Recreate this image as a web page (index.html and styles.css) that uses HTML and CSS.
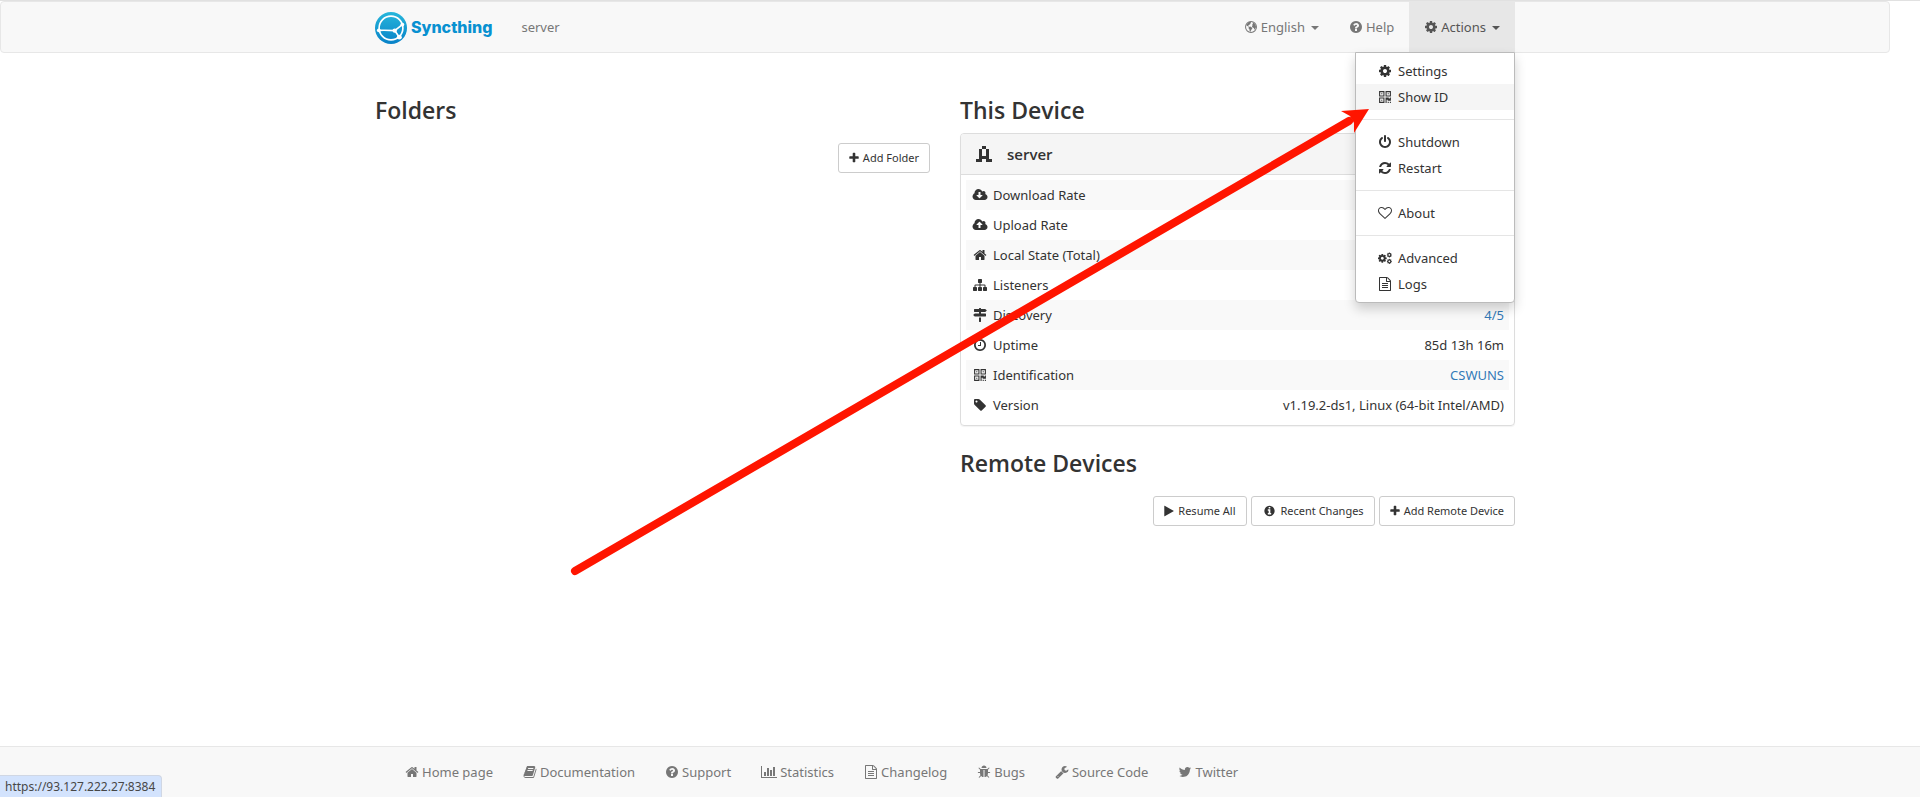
FILE: index.html
```html
<!DOCTYPE html>
<html lang="en">
<head>
<meta charset="utf-8">
<title>server | Syncthing</title>
<link rel="stylesheet" href="styles.css">
</head>
<body>
<svg class="sprite" aria-hidden="true">
  <symbol id="cog" viewBox="0 0 1792 1792"><path d="M1152 896q0-106-75-181t-181-75-181 75-75 181 75 181 181 75 181-75 75-181zm512-109v222q0 12-8 23t-20 13l-185 28q-19 54-39 91 35 50 107 138 10 12 10 25t-9 23q-27 37-99 108t-94 71q-12 0-26-9l-138-108q-44 23-91 38-16 136-29 186-7 28-36 28h-222q-14 0-24.500-8.500t-11.500-21.500l-28-184q-49-16-90-37l-141 107q-10 9-25 9-14 0-25-11-126-114-165-168-7-10-7-23 0-12 8-23 15-21 51-66.500t54-70.500q-27-50-41-99l-183-27q-13-2-21-12.500t-8-23.500v-222q0-12 8-23t19-13l186-28q14-46 39-92-40-57-107-138-10-12-10-24 0-10 9-23 26-36 98.500-107.500t94.500-71.500q13 0 26 10l138 107q44-23 91-38 16-136 29-186 7-28 36-28h222q14 0 24.500 8.500t11.500 21.500l28 184q49 16 90 37l142-107q9-9 24-9 13 0 25 10 129 119 165 170 7 8 7 22 0 12-8 23-15 21-51 66.500t-54 70.500q26 50 41 98l183 28q13 2 21 12.500t8 23.500z"/></symbol>
  <symbol id="cogs" viewBox="0 0 2048 1792"><use href="#cog" x="-120" y="190" width="1500" height="1500"/><use href="#cog" x="1230" y="20" width="860" height="860"/><use href="#cog" x="1230" y="960" width="860" height="860"/></symbol>
  <symbol id="home" viewBox="0 0 1792 1792"><path d="M1472 992v480q0 26-19 45t-45 19h-384v-384h-256v384h-384q-26 0-45-19t-19-45v-480q0-1 .5-3t.5-3l575-474 575 474q1 2 1 6zm223-69l-62 74q-8 9-21 11h-3q-13 0-21-7l-692-577-692 577q-12 8-24 7-13-2-21-11l-62-74q-8-10-7-23.500t11-21.500l719-599q32-26 76-26t76 26l244 204v-195q0-14 9-23t23-9h192q14 0 23 9t9 23v408l219 182q10 8 11 21.500t-7 23.500z"/></symbol>
  <symbol id="plus" viewBox="192 0 1408 1792"><path d="M1600 736v192q0 40-28 68t-68 28h-416v416q0 40-28 68t-68 28h-192q-40 0-68-28t-28-68v-416h-416q-40 0-68-28t-28-68v-192q0-40 28-68t68-28h416v-416q0-40 28-68t68-28h192q40 0 68 28t28 68v416h416q40 0 68 28t28 68z"/></symbol>
  <symbol id="play" viewBox="192 0 1408 1792"><path d="M1576 927l-1328 738q-23 13-39.500 3t-16.500-36v-1472q0-26 16.500-36t39.500 3l1328 738q23 13 23 31t-23 31z"/></symbol>
  <symbol id="question" viewBox="0 0 1792 1792"><path d="M1024 1376v-192q0-14-9-23t-23-9h-192q-14 0-23 9t-9 23v192q0 14 9 23t23 9h192q14 0 23-9t9-23zm256-672q0-88-55.500-163t-138.500-116-170-41q-243 0-371 213-15 24 8 42l132 100q7 6 19 6 16 0 25-12 53-68 86-92 34-24 86-24 48 0 85.500 26t37.500 59q0 38-20 61t-68 45q-63 28-115.500 86.500t-52.500 125.500v36q0 14 9 23t23 9h192q14 0 23-9t9-23q0-19 21.500-49.500t54.500-49.500q32-18 49-28.500t46-35 44.500-48 28-60.500 12.500-81zm384 192q0 209-103 385.500t-279.500 279.500-385.500 103-385.500-103-279.500-279.500-103-385.500 103-385.500 279.500-279.500 385.500-103 385.500 103 279.500 279.500 103 385.500z"/></symbol>
  <symbol id="info" viewBox="0 0 1792 1792"><path d="M1152 1376v-160q0-14-9-23t-23-9h-96v-512q0-14-9-23t-23-9h-320q-14 0-23 9t-9 23v160q0 14 9 23t23 9h96v320h-96q-14 0-23 9t-9 23v160q0 14 9 23t23 9h448q14 0 23-9t9-23zm-128-896v-160q0-14-9-23t-23-9h-192q-14 0-23 9t-9 23v160q0 14 9 23t23 9h192q14 0 23-9t9-23zm640 416q0 209-103 385.500t-279.500 279.500-385.500 103-385.500-103-279.500-279.500-103-385.500 103-385.500 279.500-279.500 385.500-103 385.500 103 279.500 279.500 103 385.500z"/></symbol>
  <symbol id="power" viewBox="0 0 1792 1792"><path d="M1664 896q0 156-61 298t-164 245-245 164-298 61-298-61-245-164-164-245-61-298q0-182 80.500-343t226.500-270q43-32 95.500-25t83.500 50q32 42 24.500 94.500t-49.500 84.500q-98 74-151.500 181t-53.500 228q0 104 40.500 198.500t109.500 163.500 163.500 109.500 198.500 40.500 198.500-40.500 163.500-109.500 109.500-163.500 40.500-198.500q0-121-53.500-228t-151.500-181q-42-32-49.500-84.500t24.500-94.500q31-43 84-50t95 25q146 109 226.500 270t80.500 343zm-640-768v640q0 52-38 90t-90 38-90-38-38-90v-640q0-52 38-90t90-38 90 38 38 90z"/></symbol>
  <symbol id="refresh" viewBox="0 0 1792 1792"><path d="M1639 1056q0 5-1 7-64 268-268 434.500t-478 166.500q-146 0-282.500-55t-243.500-157l-129 129q-19 19-45 19t-45-19-19-45v-448q0-26 19-45t45-19h448q26 0 45 19t19 45-19 45l-137 137q71 66 161 102t187 36q134 0 250-65t186-179q11-17 53-117 8-23 30-23h192q13 0 22.500 9.500t9.500 22.500zm25-800v448q0 26-19 45t-45 19h-448q-26 0-45-19t-19-45 19-45l138-138q-148-137-349-137-134 0-250 65t-186 179q-11 17-53 117-8 23-30 23h-199q-13 0-22.500-9.500t-9.500-22.500v-7q65-268 270-434.500t480-166.500q146 0 284 55.500t245 156.500l130-129q19-19 45-19t45 19 19 45z"/></symbol>
  <symbol id="heart" viewBox="0 0 1792 1792"><path d="M1664 596q0-81-21.500-143t-55-98.500-81.500-59.500-94-31-98-8-112 25.500-110.500 64-86.500 72-60 61.500q-18 22-49 22t-49-22q-24-28-60-61.500t-86.500-72-110.500-64-112-25.500-98 8-94 31-81.500 59.500-55 98.500-21.500 143q0 168 187 355l581 560 580-559q188-188 188-356zm128 0q0 221-229 450l-623 600q-18 18-44 18t-44-18l-624-602q-10-8-27.500-26t-55.500-65.500-68-97.500-53.500-121-23.500-138q0-220 127-344t351-124q62 0 126.500 21.500t120 58 95.500 68.500 76 68q36-36 76-68t95.500-68.500 120-58 126.500-21.500q224 0 351 124t127 344z"/></symbol>
  <symbol id="file" viewBox="0 0 1792 1792"><path d="M1596 380q28 28 48 76t20 88v1152q0 40-28 68t-68 28h-1344q-40 0-68-28t-28-68v-1600q0-40 28-68t68-28h896q40 0 88 20t76 48zm-444-244v376h376q-10-29-22-41l-313-313q-12-12-41-22zm384 1528v-1024h-416q-40 0-68-28t-28-68v-416h-768v1536h1280zm-1024-864q0-14 9-23t23-9h704q14 0 23 9t9 23v64q0 14-9 23t-23 9h-704q-14 0-23-9t-9-23v-64zm736 224q14 0 23 9t9 23v64q0 14-9 23t-23 9h-704q-14 0-23-9t-9-23v-64q0-14 9-23t23-9h704zm0 256q14 0 23 9t9 23v64q0 14-9 23t-23 9h-704q-14 0-23-9t-9-23v-64q0-14 9-23t23-9h704z"/></symbol>
  <symbol id="clock" viewBox="0 0 1792 1792"><path d="M1024 544v448q0 14-9 23t-23 9h-320q-14 0-23-9t-9-23v-64q0-14 9-23t23-9h224v-352q0-14 9-23t23-9h64q14 0 23 9t9 23zm416 352q0-148-73-273t-198-198-273-73-273 73-198 198-73 273 73 273 198 198 273 73 273-73 198-198 73-273zm224 0q0 209-103 385.500t-279.500 279.500-385.500 103-385.500-103-279.500-279.500-103-385.500 103-385.500 279.500-279.500 385.500-103 385.500 103 279.500 279.500 103 385.500z"/></symbol>
  <symbol id="tag" viewBox="0 0 1792 1792"><path d="M576 448q0-53-37.500-90.500t-90.500-37.500-90.500 37.500-37.500 90.500 37.500 90.500 90.500 37.500 90.500-37.500 37.500-90.500zm1067 576q0 53-37 90l-491 492q-39 37-91 37-53 0-90-37l-715-716q-38-37-64.500-101t-26.500-117v-416q0-52 38-90t90-38h416q53 0 117 26.500t102 64.500l715 714q37 39 37 91z"/></symbol>
  <symbol id="twitter" viewBox="0 0 1792 1792"><path d="M1684 408q-67 98-162 167 1 14 1 42 0 130-38 259.500t-115.500 248.500-184.500 210.500-258 146-323 54.500q-271 0-496-145 35 4 78 4 225 0 401-138-105-2-188-64.500t-114-159.500q33 5 61 5 43 0 85-11-112-23-185.500-111.500t-73.500-205.500v-4q68 38 146 41-66-44-105-115t-39-154q0-88 44-163 121 149 294.500 238.500t371.500 99.500q-8-38-8-74 0-134 94.500-228.500t228.500-94.500q140 0 236 102 109-21 205-78-37 115-142 178 93-10 186-50z"/></symbol>
  <symbol id="wrench" viewBox="0 0 1792 1792"><path d="M448 1472q0-26-19-45t-45-19-45 19-19 45 19 45 45 19 45-19 19-45zm644-420l-682 682q-37 37-90 37-52 0-91-37l-106-108q-38-36-38-90 0-53 38-91l681-681q39 98 114.500 173.500t173.500 114.500zm634-435q0 39-23 106-47 134-164.500 217.500t-258.500 83.500q-185 0-316.500-131.500t-131.500-316.500 131.500-316.500 316.500-131.500q58 0 121.500 16.500t107.500 46.500q16 11 16 28t-16 28l-293 169v224l193 107q5-3 79-48.500t135.500-81 70.500-35.500q15 0 23.500 10t8.500 25z"/></symbol>
  <symbol id="sitemap" viewBox="0 0 1792 1792"><path d="M1792 1248v320q0 40-28 68t-68 28h-320q-40 0-68-28t-28-68v-320q0-40 28-68t68-28h96v-192h-512v192h96q40 0 68 28t28 68v320q0 40-28 68t-68 28h-320q-40 0-68-28t-28-68v-320q0-40 28-68t68-28h96v-192h-512v192h96q40 0 68 28t28 68v320q0 40-28 68t-68 28h-320q-40 0-68-28t-28-68v-320q0-40 28-68t68-28h96v-192q0-52 38-90t90-38h512v-192h-96q-40 0-68-28t-28-68v-320q0-40 28-68t68-28h320q40 0 68 28t28 68v320q0 40-28 68t-68 28h-96v192h512q52 0 90 38t38 90v192h96q40 0 68 28t28 68z"/></symbol>
  <symbol id="signs" viewBox="0 0 1792 1792"><path d="M1745 297q10 10 10 23t-10 23l-141 141q-28 28-68 28h-1344q-26 0-45-19t-19-45v-256q0-26 19-45t45-19h576v-64q0-26 19-45t45-19h128q26 0 45 19t19 45v64h512q40 0 68 28zm-977 919h256v512q0 26-19 45t-45 19h-128q-26 0-45-19t-19-45v-512zm832-512q26 0 45 19t19 45v256q0 26-19 45t-45 19h-1344q-40 0-68-28l-141-141q-10-10-10-23t10-23l141-141q28-28 68-28h512v-192h256v192h576z"/></symbol>
  <symbol id="qrcode" viewBox="64 0 1664 1664"><path d="M576 1152v128h-128v-128h128zm0-768v128h-128v-128h128zm768 0v128h-128v-128h128zm-1024 1023h384v-383h-384v383zm0-767h384v-384h-384v384zm768 0h384v-384h-384v384zm-256 256v640h-640v-640h640zm512 512v128h-128v-128h128zm256 0v128h-128v-128h128zm0-512v384h-384v-128h-128v384h-128v-640h384v128h128v-128h128zm-768-768v640h-640v-640h640zm768 0v640h-640v-640h640z"/></symbol>
  <symbol id="download" viewBox="-64 0 1920 1792"><path d="M1216 928q0-14-9-23t-23-9h-224v-352q0-13-9.500-22.500t-22.500-9.500h-192q-13 0-22.500 9.500t-9.500 22.500v352h-224q-13 0-22.500 9.500t-9.500 22.500q0 14 9 23l352 352q9 9 23 9t23-9l351-351q10-12 10-24zm640 224q0 159-112.500 271.500t-271.500 112.500h-1088q-185 0-316.500-131.500t-131.500-316.500q0-130 70-240t188-165q-2-30-2-43 0-212 150-362t362-150q156 0 285.500 87t188.500 231q71-62 166-62 106 0 181 75t75 181q0 76-41 138 130 31 213.500 135.500t83.500 238.500z"/></symbol>
  <symbol id="upload" viewBox="-64 0 1920 1792"><path d="M1216 864q0-14-9-23l-352-352q-9-9-23-9t-23 9l-351 351q-10 12-10 24 0 14 9 23t23 9h224v352q0 13 9.500 22.500t22.500 9.500h192q13 0 22.500-9.500t9.500-22.500v-352h224q13 0 22.500-9.500t9.500-22.500zm640 288q0 159-112.500 271.500t-271.500 112.500h-1088q-185 0-316.500-131.500t-131.500-316.500q0-130 70-240t188-165q-2-30-2-43 0-212 150-362t362-150q156 0 285.500 87t188.500 231q71-62 166-62 106 0 181 75t75 181q0 76-41 138 130 31 213.500 135.500t83.500 238.500z"/></symbol>
  <symbol id="chart" viewBox="0 0 2048 1792"><path d="M640 896v512h-256v-512h256zm384-512v1024h-256v-1024h256zm1024 1152v128h-2048v-1536h128v1408h1920zm-640-896v768h-256v-768h256zm384-384v1152h-256v-1152h256z"/></symbol>
  <symbol id="book" viewBox="0 0 1792 1792"><path d="M1703 478q40 57 18 129l-275 906q-19 64-76.500 107.500t-122.500 43.500h-923q-77 0-148.500-53.500t-99.500-131.500q-24-67-2-127 0-4 3-27t4-37q1-8-3-21.500t-3-19.500q2-11 8-21t16.500-23.500 16.500-23.500q23-38 45-91.500t30-91.500q3-10 .5-30t-.5-28q3-11 17-28t17-23q21-36 42-92t25-90q1-9-2.500-32t.5-28q4-13 22-30.500t22-22.500q19-26 42.500-84.500t27.500-96.500q1-8-3-25.500t-2-26.500q2-8 9-18t18-23 17-21q8-12 16.500-30.500t15-35 16-36 19.500-32 26.500-23.500 36-11.500 47.500 5.500l-1 3q38-9 51-9h761q74 0 114 56t18 130l-274 906q-36 119-71.500 153.500t-128.500 34.500h-869q-27 0-38 15-11 16-1 43 24 70 144 70h923q29 0 56-15.500t35-41.500l300-987q7-22 5-57 38 15 59 43zm-1064 2q-4 13 2 22.500t20 9.500h608q13 0 25.500-9.500t16.500-22.500l21-64q4-13-2-22.500t-20-9.500h-608q-13 0-25.500 9.500t-16.500 22.500zm-83 256q-4 13 2 22.500t20 9.500h608q13 0 25.500-9.500t16.500-22.500l21-64q4-13-2-22.500t-20-9.500h-608q-13 0-25.500 9.500t-16.500 22.500z"/></symbol>
  <symbol id="bug" viewBox="0 0 1792 1792"><path d="M1696 960q0 26-19 45t-45 19h-224q0 171-67 290l208 209q19 19 19 45t-19 45q-18 19-45 19t-45-19l-198-197q-5 5-15 13t-42 28.500-65 36.500-82 29-97 13v-896h-128v896q-51 0-101.500-13.500t-87-33-66-39-43.500-32.500l-15-14-183 207q-20 21-48 21-24 0-43-16-19-18-20.500-44.500t15.500-46.500l202-227q-58-114-58-274h-224q-26 0-45-19t-19-45 19-45 45-19h224v-294l-173-173q-19-19-19-45t19-45 45-19 45 19l173 173h844l173-173q19-19 45-19t45 19 19 45-19 45l-173 173v294h224q26 0 45 19t19 45zm-480-576h-640q0-133 93.500-226.500t226.500-93.500 226.500 93.500 93.500 226.500z"/></symbol>
  <symbol id="globe" viewBox="0 0 1792 1792"><circle cx="896" cy="896" r="700" fill="none" stroke="currentColor" stroke-width="130"/><path d="M330 560L620 270 850 250 930 330 800 400 860 480 740 560 620 640 540 720 620 800 560 860 450 760 350 760zM600 880L800 840 1000 960 1080 1060 960 1200 860 1400 800 1520 720 1400 700 1200 580 1060zM1020 300L1300 380 1500 700 1540 900 1460 1100 1340 1240 1260 1020 1060 920 1020 760 1120 640 1040 560 1160 460z"/></symbol>
</svg>

<header class="navbar">
  <div class="container nav-row">
    <a class="brand" href="#">
      <svg class="logo" viewBox="0 0 117 117" aria-hidden="true">
        <defs><linearGradient id="blue" x1="0" y1="0" x2="0" y2="1"><stop offset="0" stop-color="#26b6db"/><stop offset="1" stop-color="#0882c8"/></linearGradient></defs>
        <circle cx="58.500" cy="58.500" r="58.500" fill="url(#blue)"/>
        <g fill="none" stroke="#fff" stroke-width="6"><circle cx="58.500" cy="58.500" r="43.500"/><path d="M72 68L100 46M72 68L89 92M72 68Q42 66 14 67"/></g>
        <g fill="#fff"><circle cx="72" cy="68" r="8"/><circle cx="100" cy="46" r="7"/><circle cx="89" cy="92" r="9"/><circle cx="14" cy="67" r="7"/></g>
      </svg>
      <span>Syncthing</span>
    </a>
    <p class="nav-name">server</p>
    <nav class="nav-menu">
      <button class="nav-item" type="button"><svg class="icon"><use href="#globe"/></svg>English<span class="caret"></span></button>
      <a class="nav-item" href="#"><svg class="icon"><use href="#question"/></svg>Help</a>
      <div class="dropdown">
        <button class="nav-item open" type="button" aria-expanded="true"><svg class="icon"><use href="#cog"/></svg>Actions<span class="caret"></span></button>
        <ul class="menu">
          <li><a href="#"><svg class="icon"><use href="#cog"/></svg>Settings</a></li>
          <li><a class="hover" href="#"><svg class="icon"><use href="#qrcode"/></svg>Show ID</a></li>
          <li class="divider"></li>
          <li><a href="#"><svg class="icon"><use href="#power"/></svg>Shutdown</a></li>
          <li><a href="#"><svg class="icon"><use href="#refresh"/></svg>Restart</a></li>
          <li class="divider"></li>
          <li><a href="#"><svg class="icon"><use href="#heart"/></svg>About</a></li>
          <li class="divider"></li>
          <li><a href="#"><svg class="icon"><use href="#cogs"/></svg>Advanced</a></li>
          <li><a href="#"><svg class="icon"><use href="#file"/></svg>Logs</a></li>
        </ul>
      </div>
    </nav>
  </div>
</header>

<main class="container columns">
  <section>
    <h3>Folders</h3>
    <div class="buttons"><button class="btn" type="button"><svg class="icon"><use href="#plus"/></svg>Add Folder</button></div>
  </section>
  <section>
    <h3>This Device</h3>
    <div class="panel">
      <button class="panel-heading" type="button">
        <svg class="identicon" viewBox="0 0 5 5" shape-rendering="crispEdges" aria-hidden="true"><path d="M2 0h1v1h-1zM1 1h1v3h-1zM3 1h1v3h-1zM2 3h1v1h-1zM0 4h2v1h-2zM3 4h2v1h-2z"/></svg>
        server
      </button>
      <div class="panel-body">
        <table>
          <tbody>
            <tr><th scope="row"><svg class="icon"><use href="#download"/></svg>Download Rate</th><td></td></tr>
            <tr><th scope="row"><svg class="icon"><use href="#upload"/></svg>Upload Rate</th><td></td></tr>
            <tr><th scope="row"><svg class="icon"><use href="#home"/></svg>Local State (Total)</th><td></td></tr>
            <tr><th scope="row"><svg class="icon"><use href="#sitemap"/></svg>Listeners</th><td></td></tr>
            <tr><th scope="row"><svg class="icon"><use href="#signs"/></svg>Discovery</th><td><a href="#">4/5</a></td></tr>
            <tr><th scope="row"><svg class="icon"><use href="#clock"/></svg>Uptime</th><td>85d 13h 16m</td></tr>
            <tr><th scope="row"><svg class="icon"><use href="#qrcode"/></svg>Identification</th><td><a href="#">CSWUNS</a></td></tr>
            <tr><th scope="row"><svg class="icon"><use href="#tag"/></svg>Version</th><td>v1.19.2-ds1, Linux (64-bit Intel/AMD)</td></tr>
          </tbody>
        </table>
      </div>
    </div>
    <h3>Remote Devices</h3>
    <div class="buttons">
      <button class="btn" type="button"><svg class="icon"><use href="#play"/></svg>Resume All</button>
      <button class="btn" type="button"><svg class="icon wide"><use href="#info"/></svg>Recent Changes</button>
      <button class="btn" type="button"><svg class="icon"><use href="#plus"/></svg>Add Remote Device</button>
    </div>
  </section>
</main>

<footer class="footer">
  <nav class="container footer-row">
    <a href="#"><svg class="icon"><use href="#home"/></svg>Home page</a>
    <a href="#"><svg class="icon"><use href="#book"/></svg>Documentation</a>
    <a href="#"><svg class="icon"><use href="#question"/></svg>Support</a>
    <a href="#"><svg class="icon chart"><use href="#chart"/></svg>Statistics</a>
    <a href="#"><svg class="icon"><use href="#file"/></svg>Changelog</a>
    <a href="#"><svg class="icon"><use href="#bug"/></svg>Bugs</a>
    <a href="#"><svg class="icon"><use href="#wrench"/></svg>Source Code</a>
    <a href="#"><svg class="icon"><use href="#twitter"/></svg>Twitter</a>
  </nav>
</footer>

<div class="status">https://93.127.222.27:8384</div>

<svg class="arrow" viewBox="0 0 802 474" aria-hidden="true">
  <path class="shaft" d="M8 466L782 16"/>
  <path d="M802 4L774 6L783 11L787 18L787 28Z"/>
</svg>
</body>
</html>
```

FILE: styles.css
```css
* { box-sizing: border-box; }

body {
  margin: 0;
  padding-right: 30px;
  min-height: 100vh;
  border-top: 1px solid #e1e1e1;
  background: #fff;
  color: #333;
  font-family: "Noto Sans", "Open Sans", sans-serif;
  font-size: 13px;
  line-height: 20px;
}

a { color: #337ab7; text-decoration: none; }
button { font: inherit; color: inherit; cursor: pointer; }
.sprite { position: absolute; width: 0; height: 0; }
.icon { flex: none; width: 14px; height: 14px; fill: currentColor; }

.container { max-width: 1170px; margin: 0 auto; padding: 0 15px; }

/* Top bar */
.navbar {
  margin-bottom: 44px;
  border: 1px solid #e7e7e7;
  border-radius: 4px;
  background: #f8f8f8;
}
.nav-row { display: flex; height: 50px; }
.brand { display: flex; align-items: center; gap: 4px; color: #0891d1; font: 800 16px/20px Inter, sans-serif; }
.logo { width: 32px; height: 32px; margin-top: 2px; }
.nav-name { margin: 15px 0 0 29px; color: #777; }
.nav-menu { display: flex; margin-left: auto; }
.nav-item {
  display: flex;
  align-items: center;
  gap: 3px;
  height: 50px;
  padding: 0 15px;
  border: 0;
  background: none;
  color: #777;
}
.nav-item.open { background: #e7e7e7; color: #555; }
.caret {
  margin: 2px 0 0 3px;
  border: 4px solid transparent;
  border-top-color: currentColor;
  border-bottom: 0;
}

/* Actions menu */
.dropdown { position: relative; }
.menu {
  position: absolute;
  top: 100%;
  right: 0;
  z-index: 2;
  width: 160px;
  margin: 0;
  padding: 5px 0;
  border: 1px solid #bbb;
  border-radius: 0 0 4px 4px;
  background: #fff;
  box-shadow: 0 6px 12px rgba(0, 0, 0, .18);
  list-style: none;
}
.menu a { display: flex; align-items: center; gap: 6px; padding: 3px 20px 3px 22px; color: #333; }
.menu .hover { background: #f5f5f5; }
.divider { height: 1px; margin: 9px 0; background: #e5e5e5; }

/* Content */
.columns { display: grid; grid-template-columns: 1fr 1fr; gap: 30px; }
h3 { margin: 0 0 10px; font-family: "Open Sans", sans-serif; font-size: 23px; font-weight: 600; line-height: 26px; }
.panel {
  margin-bottom: 24px;
  border: 1px solid #ddd;
  border-radius: 4px;
  box-shadow: 0 1px 1px rgba(0, 0, 0, .05);
}
.panel-heading {
  display: flex;
  align-items: center;
  gap: 15px;
  width: 100%;
  height: 41px;
  padding: 0 15px;
  border: 0;
  border-bottom: 1px solid #ddd;
  border-radius: 3px 3px 0 0;
  background: #f5f5f5;
  font-family: "Open Sans", sans-serif;
  font-size: 15px;
  font-weight: 600;
}
.identicon { width: 16px; height: 16px; fill: #333; }
.panel-body { padding: 5px; }
table { width: 100%; border-collapse: collapse; }
tr:nth-child(odd) { background: #f9f9f9; }
th, td { height: 30px; padding: 5px; font-weight: 400; }
th { display: flex; align-items: center; gap: 4px; text-align: left; }
th .icon { width: 18px; }
td { text-align: right; }

.buttons { display: flex; justify-content: flex-end; gap: 4px; margin-top: 20px; }
.btn {
  display: flex;
  align-items: center;
  gap: 4px;
  height: 30px;
  padding: 0 10px;
  border: 1px solid #ccc;
  border-radius: 3px;
  background: #fff;
  font-size: 11px;
  line-height: 18px;
}
.btn .icon { width: 10px; height: 12px; }
.btn .wide { width: 15px; }

/* Bottom bar */
.footer {
  position: fixed;
  right: 0;
  bottom: 0;
  left: 0;
  border-top: 1px solid #e7e7e7;
  background: #f8f8f8;
}
.footer-row { display: flex; height: 50px; }
.footer-row a { display: flex; align-items: center; gap: 3px; padding: 0 15px; color: #777; }
.footer-row .chart { width: 16px; }

.status {
  position: fixed;
  bottom: 0;
  left: 0;
  padding: 2px 6px 1px 5px;
  border: 1px solid #d0d7e4;
  border-width: 1px 1px 0 0;
  border-radius: 0 4px 0 0;
  background: #d3e3fd;
  color: #474747;
  font-size: 12px;
  line-height: 18px;
}

.arrow { position: absolute; top: 105px; left: 567px; z-index: 3; width: 802px; height: 474px; fill: #ff1500; pointer-events: none; }
.shaft { fill: none; stroke: #ff1500; stroke-width: 8; stroke-linecap: round; }
```
